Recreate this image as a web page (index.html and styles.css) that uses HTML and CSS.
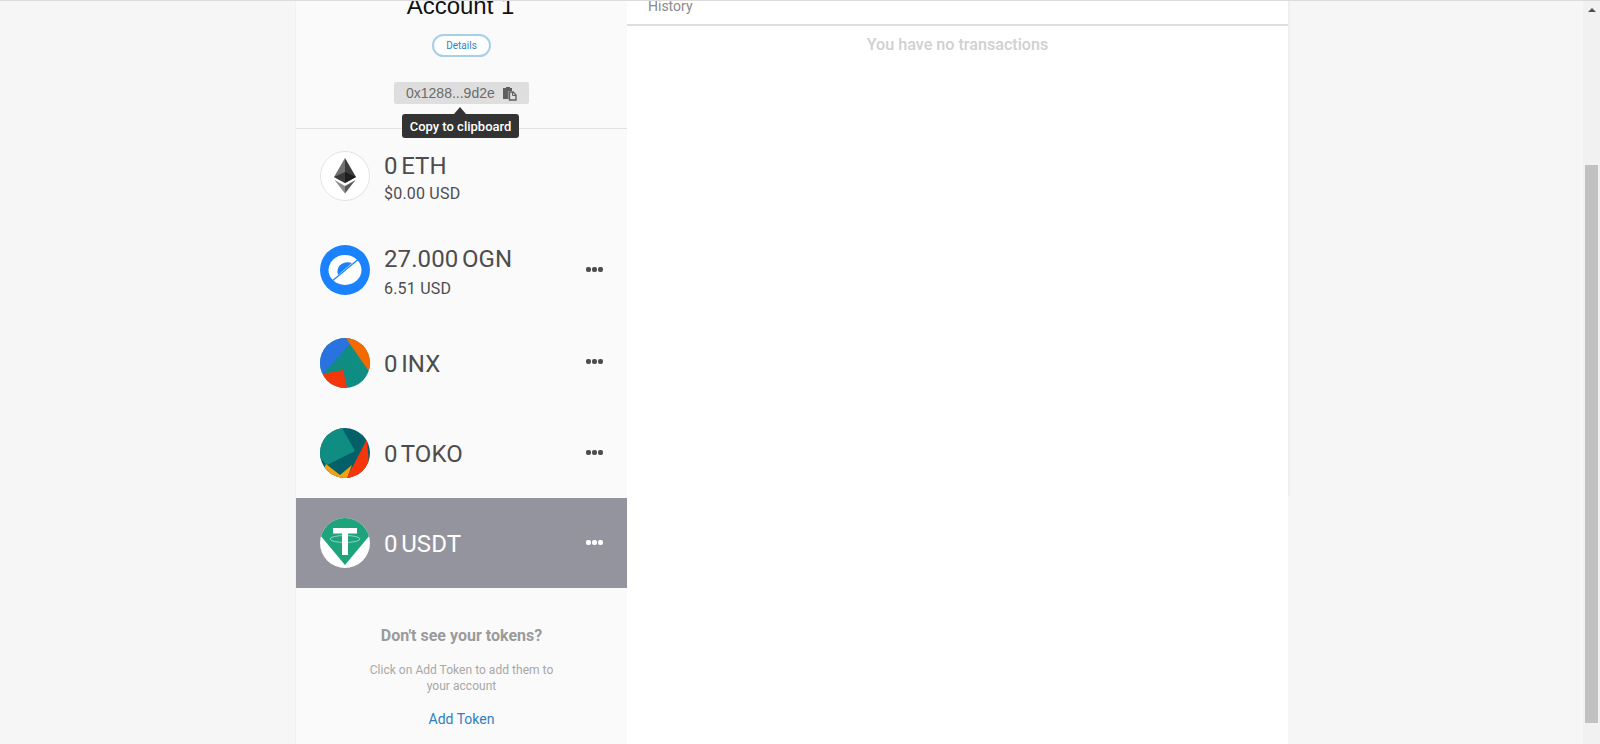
FILE: index.html
```html
<!DOCTYPE html>
<html lang="en">
<head>
    <meta charset="UTF-8">
    <meta name="viewport" content="width=device-width, initial-scale=1.0">
    <title>Wallet</title>
    <link rel="stylesheet" href="styles.css">
</head>
<body>
    <div class="page">
        <div class="wallet">
            <aside class="sidebar">
                <div class="account">
                    <div class="account-name">Account 1</div>
                    <button class="btn-details">Details</button>
                    <div class="address">
                        <span>0x1288...9d2e</span>
                        <svg class="copy-icon" width="15" height="15" viewBox="0 0 15 15">
                            <path d="M1 2h3V1h4v1h2v3H6.500v8H1z" fill="#5f5f5f"/>
                            <path d="M7.500 6h3.500l3 3v5H7.500z" fill="none" stroke="#5f5f5f" stroke-width="1.400"/>
                            <path d="M10.500 6v3.500H14" fill="none" stroke="#5f5f5f" stroke-width="1"/>
                        </svg>
                        <div class="tooltip">Copy to clipboard</div>
                    </div>
                </div>

                <div class="token token-eth">
                    <svg class="token-icon" viewBox="0 0 50 50">
                        <circle cx="25" cy="25" r="24.500" fill="#fff" stroke="#e3e3e3"/>
                        <path d="M25 7 14 26l11 6z" fill="#727272"/>
                        <path d="M25 7l11 19-11 6z" fill="#3c3c3c"/>
                        <path d="M14 26l11-5v11z" fill="#3a3a3a"/>
                        <path d="M36 26l-11-5v11z" fill="#1e1e1e"/>
                        <path d="M14.500 29 25 35v7.500z" fill="#8c8c8c"/>
                        <path d="M35.500 29 25 35v7.500z" fill="#5a5a5a"/>
                    </svg>
                    <div class="token-text">
                        <div class="token-balance">0 ETH</div>
                        <div class="token-fiat">$0.00 USD</div>
                    </div>
                </div>

                <div class="token token-ogn">
                    <svg class="token-icon" viewBox="0 0 50 50">
                        <circle cx="25" cy="25" r="25" fill="#1a82ff"/>
                        <ellipse cx="25" cy="25" rx="16.500" ry="15" fill="#fff"/>
                        <path d="M18 30C15 21 24 15 32 18z" fill="#1a82ff"/>
                        <path d="M11 37 41 12" stroke="#1a82ff" stroke-width="1.200"/>
                    </svg>
                    <div class="token-text">
                        <div class="token-balance">27.000 OGN</div>
                        <div class="token-fiat">6.51 USD</div>
                    </div>
                    <div class="token-menu"><i></i><i></i><i></i></div>
                </div>

                <div class="token token-inx">
                    <svg class="token-icon" viewBox="0 0 50 50">
                        <defs><clipPath id="inxClip"><circle cx="25" cy="25" r="25"/></clipPath></defs>
                        <g clip-path="url(#inxClip)">
                            <rect width="50" height="50" fill="#0f8d82"/>
                            <path d="M0 0h29l2 5L3 36H0z" fill="#2a72e0"/>
                            <path d="M26 0h24v32h-2L30 6z" fill="#f56a00"/>
                            <path d="M3 36l20-4 4 18H0z" fill="#f5350a"/>
                        </g>
                    </svg>
                    <div class="token-text">
                        <div class="token-balance">0 INX</div>
                    </div>
                    <div class="token-menu"><i></i><i></i><i></i></div>
                </div>

                <div class="token token-toko">
                    <svg class="token-icon" viewBox="0 0 50 50">
                        <defs><clipPath id="tokoClip"><circle cx="25" cy="25" r="25"/></clipPath></defs>
                        <g clip-path="url(#tokoClip)">
                            <rect width="50" height="50" fill="#035f68"/>
                            <path d="M0 0h22l13 23L7 37l-7-7z" fill="#0f8d82"/>
                            <path d="M47 11l3 39H26l7-12z" fill="#f5350a"/>
                            <path d="M6 36l14 11 12-10-5 13H0z" fill="#f0a010"/>
                        </g>
                    </svg>
                    <div class="token-text">
                        <div class="token-balance">0 TOKO</div>
                    </div>
                    <div class="token-menu"><i></i><i></i><i></i></div>
                </div>

                <div class="token token-usdt selected">
                    <svg class="token-icon" viewBox="0 0 50 50">
                        <defs><clipPath id="usdtClip"><circle cx="25" cy="25" r="25"/></clipPath></defs>
                        <circle cx="25" cy="25" r="25" fill="#fff"/>
                        <g clip-path="url(#usdtClip)">
                            <path d="M12 0h26l12 17-25 30L0 17z" fill="#1ea47c"/>
                        </g>
                        <path d="M13 10h24v5.500h-9V37h-6V15.500h-9z" fill="#fff"/>
                        <ellipse cx="25" cy="21" rx="15" ry="3.500" fill="none" stroke="#fff" stroke-opacity=".5"/>
                    </svg>
                    <div class="token-text">
                        <div class="token-balance">0 USDT</div>
                    </div>
                    <div class="token-menu"><i></i><i></i><i></i></div>
                </div>

                <div class="add-token">
                    <h4>Don't see your tokens?</h4>
                    <p>Click on Add Token to add them to your account</p>
                    <a href="#">Add Token</a>
                </div>
            </aside>

            <main class="main">
                <div class="tabs"><span>History</span></div>
                <div class="empty">You have no transactions</div>
            </main>
        </div>
        <div class="wallet-edge"></div>
    </div>

    <div class="scrollbar">
        <div class="scroll-up"></div>
        <div class="scroll-thumb"></div>
    </div>
</body>
</html>
```

FILE: styles.css
```css
:root {
    --page: #f6f6f6;
    --sidebar: #fafafa;
    --line: #e2e2e2;
    --text: #4d4d4d;
    --blue: #2f7fc1;
}

* {
    margin: 0;
    padding: 0;
    box-sizing: border-box;
}

html, body {
    height: 744px;
    overflow: hidden;
}

body {
    display: flex;
    font-family: Roboto, sans-serif;
    background: var(--page);
    color: var(--text);
    border-top: 1px solid #dcdcdc;
}

.page {
    flex: 1;
    display: flex;
    align-items: flex-start;
    padding-left: 296px;
    height: 743px;
}

.wallet {
    width: 992px;
    height: 743px;
    display: flex;
    flex-shrink: 0;
}

.wallet-edge {
    width: 2px;
    height: 495px;
    background: #efefef;
}

.sidebar {
    width: 331px;
    background: var(--sidebar);
    box-shadow: -1px 0 0 #f1f1f1;
    display: flex;
    flex-direction: column;
}

.account {
    height: 128px;
    border-bottom: 1px solid var(--line);
    display: flex;
    flex-direction: column;
    align-items: center;
}

.account-name {
    margin-top: -10px;
    margin-left: -2px;
    height: 30px;
    line-height: 30px;
    font-size: 24px;
    word-spacing: 1px;
    color: #111;
    font-family: "Liberation Sans", Arial, sans-serif;
}

.btn-details {
    margin-top: 13px;
    width: 59px;
    height: 23px;
    border: 2px solid #a6cfe9;
    border-radius: 12px;
    background: #fff;
    color: var(--blue);
    font-family: Roboto, sans-serif;
    font-size: 10px;
}

.address {
    position: relative;
    margin-top: 25px;
    width: 135px;
    height: 22px;
    background: #dedede;
    border-radius: 2px;
    display: flex;
    align-items: center;
    padding-left: 12px;
    gap: 7px;
    font-family: "Liberation Sans", Arial, sans-serif;
    font-size: 14px;
    color: #6b6b6b;
}

.copy-icon {
    flex-shrink: 0;
}

.tooltip {
    position: absolute;
    left: 8px;
    top: 32px;
    width: 117px;
    height: 24px;
    line-height: 25px;
    background: #333;
    border-radius: 3px;
    color: #fff;
    font-family: Roboto, sans-serif;
    font-weight: 500;
    font-size: 13px;
    text-align: center;
}

.tooltip::before {
    content: "";
    position: absolute;
    left: 52px;
    top: -7px;
    border-left: 6px solid transparent;
    border-right: 6px solid transparent;
    border-bottom: 7px solid #333;
}

.token {
    display: flex;
    align-items: center;
    padding-left: 24px;
    padding-right: 24px;
    height: 90px;
}

.token-eth,
.token-ogn {
    height: 94px;
}

.token-inx {
    height: 91px;
}

.token.selected {
    background: #94949e;
    color: #fff;
}

.token-icon {
    width: 50px;
    height: 50px;
    flex-shrink: 0;
}

.token-text {
    margin-left: 14px;
    padding-top: 2px;
    flex: 1;
}

.token-eth .token-text,
.token-ogn .token-text {
    padding-top: 3px;
}

.token-balance {
    font-size: 24px;
    line-height: 30px;
    letter-spacing: .1px;
    word-spacing: -2.500px;
}

.token-fiat {
    font-size: 16px;
    line-height: 22px;
    letter-spacing: .2px;
    margin-top: 2px;
}

.token-ogn .token-fiat {
    margin-top: 4px;
}

.token-menu {
    display: flex;
    gap: 1px;
    margin-top: -2px;
}

.token-menu i {
    width: 5px;
    height: 5px;
    border-radius: 2px;
    background: currentColor;
}

.add-token {
    flex: 1;
    text-align: center;
    padding-top: 38px;
    color: #9b9b9b;
}

.add-token h4 {
    font-size: 16px;
    font-weight: 700;
    line-height: 20px;
}

.add-token p {
    width: 200px;
    margin: 16px auto 0;
    font-size: 12px;
    line-height: 16px;
    letter-spacing: .03px;
    color: #a8a8a8;
}

.add-token a {
    display: block;
    margin-top: 16px;
    font-size: 14px;
    line-height: 18px;
    color: var(--blue);
    text-decoration: none;
}

.main {
    flex: 1;
    background: #fff;
}

.tabs {
    height: 25px;
    border-bottom: 2px solid #dedede;
    padding-left: 21px;
    font-size: 14px;
    line-height: 10px;
    color: #8a8a8a;
}

.empty {
    margin-top: 9px;
    text-align: center;
    font-size: 16.150px;
    font-weight: 500;
    line-height: 20px;
    color: #d0d0d0;
}

.scrollbar {
    width: 17px;
    height: 743px;
    flex-shrink: 0;
    background: #f1f1f1;
    padding: 0 2px;
    position: relative;
}

.scroll-up {
    width: 0;
    margin: 7px auto 0;
    border-left: 4px solid transparent;
    border-right: 4px solid transparent;
    border-bottom: 4px solid #505050;
}

.scroll-thumb {
    position: absolute;
    left: 2px;
    top: 164px;
    width: 13px;
    height: 558px;
    background: #c1c1c1;
}
```
